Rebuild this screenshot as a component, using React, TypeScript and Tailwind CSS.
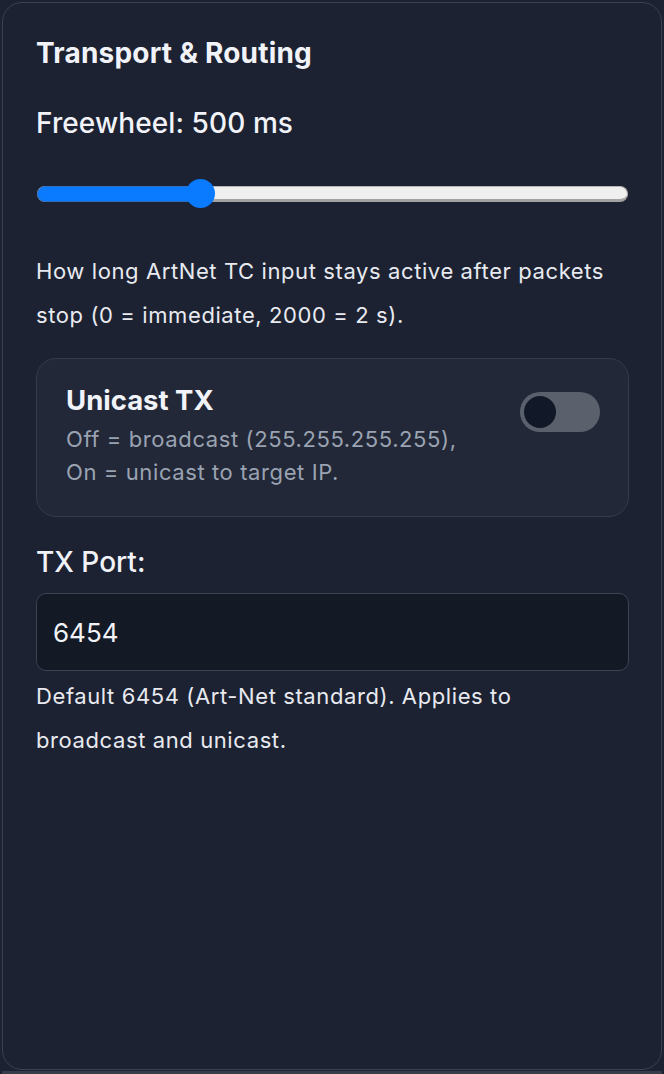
import React from "react";

function Slider() {
  return (
    <div className="relative h-[30px] w-full">
      <div className="absolute left-[1px] right-[1px] top-[7px] h-[16px] rounded-full bg-[#efefef] border border-[#b5b5b5] border-b-[3px] border-b-[#a3a3a3]" />
      <div className="absolute left-[1px] top-[7px] h-[16px] w-[166px] rounded-l-full bg-[#0a7bff] border border-[#2f6fc0]" />
      <div className="absolute left-[150px] top-[0px] h-[29px] w-[29px] rounded-full bg-[#0a7bff]" />
    </div>
  );
}

function Toggle() {
  return (
    <div className="mt-[10px] flex h-[40px] w-[80px] shrink-0 items-center rounded-full bg-[#5b616c] px-[4px]">
      <div className="h-[32px] w-[32px] rounded-full bg-[#111827]" />
    </div>
  );
}

export default function App() {
  return (
    <div
      className="flex h-[1074px] w-[664px] flex-col bg-[#1c2232] px-[2px] pt-[2px]"
      style={{ fontFamily: "Inter, 'Noto Sans', 'Liberation Sans', sans-serif" }}
    >
      <div className="flex h-[1068px] flex-col rounded-[20px] border border-[#3a4150] bg-[#1c2232] pl-[33px] pr-[32px] pt-[32px]">
        <h2 className="h-[36px] text-[28px] font-bold leading-[36px] tracking-[0.2px] text-[#f1f3f9]">
          Transport &amp; Routing
        </h2>
        <div className="mt-[34px] h-[36px] text-[28px] font-medium leading-[36px] tracking-[0.1px] text-[#f1f3f9]">
          Freewheel: 500 ms
        </div>
        <div className="mt-[38px]">
          <Slider />
        </div>
        <p className="mt-[40px] text-[22px] leading-[44px] tracking-[0.6px] text-[#e8eaf0]">
          How long ArtNet TC input stays active after packets stop (0 = immediate, 2000 = 2 s).
        </p>
        <div className="mt-[21px] flex h-[159px] items-start justify-between rounded-[20px] border border-[#343b4a] bg-[#222837] pl-[29px] pr-[28px] pt-[23px]">
          <div className="flex flex-col">
            <div className="h-[36px] text-[27.5px] font-bold leading-[36px] text-[#f1f3f9]">
              Unicast TX
            </div>
            <div className="mt-[5px] text-[22px] leading-[33px] tracking-[0.6px] text-[#9aa3b2]">
              Off = broadcast (255.255.255.255),
              <br />
              On = unicast to target IP.
            </div>
          </div>
          <Toggle />
        </div>
        <label className="mt-[27px] h-[36px] text-[28px] font-medium leading-[36px] text-[#f1f3f9]">
          TX Port:
        </label>
        <div className="mt-[13px] flex h-[78px] items-center rounded-[10px] border border-[#3d4350] bg-[#141926] pl-[16px] text-[26px] text-[#f1f3f9]">
          6454
        </div>
        <p className="mt-[3px] text-[22px] leading-[44px] tracking-[0.6px] text-[#e8eaf0]">
          Default 6454 (Art-Net standard). Applies to
          <br />
          broadcast and unicast.
        </p>
      </div>
      <div className="mt-[1px] flex-1 bg-[#363d4a]" />
    </div>
  );
}
